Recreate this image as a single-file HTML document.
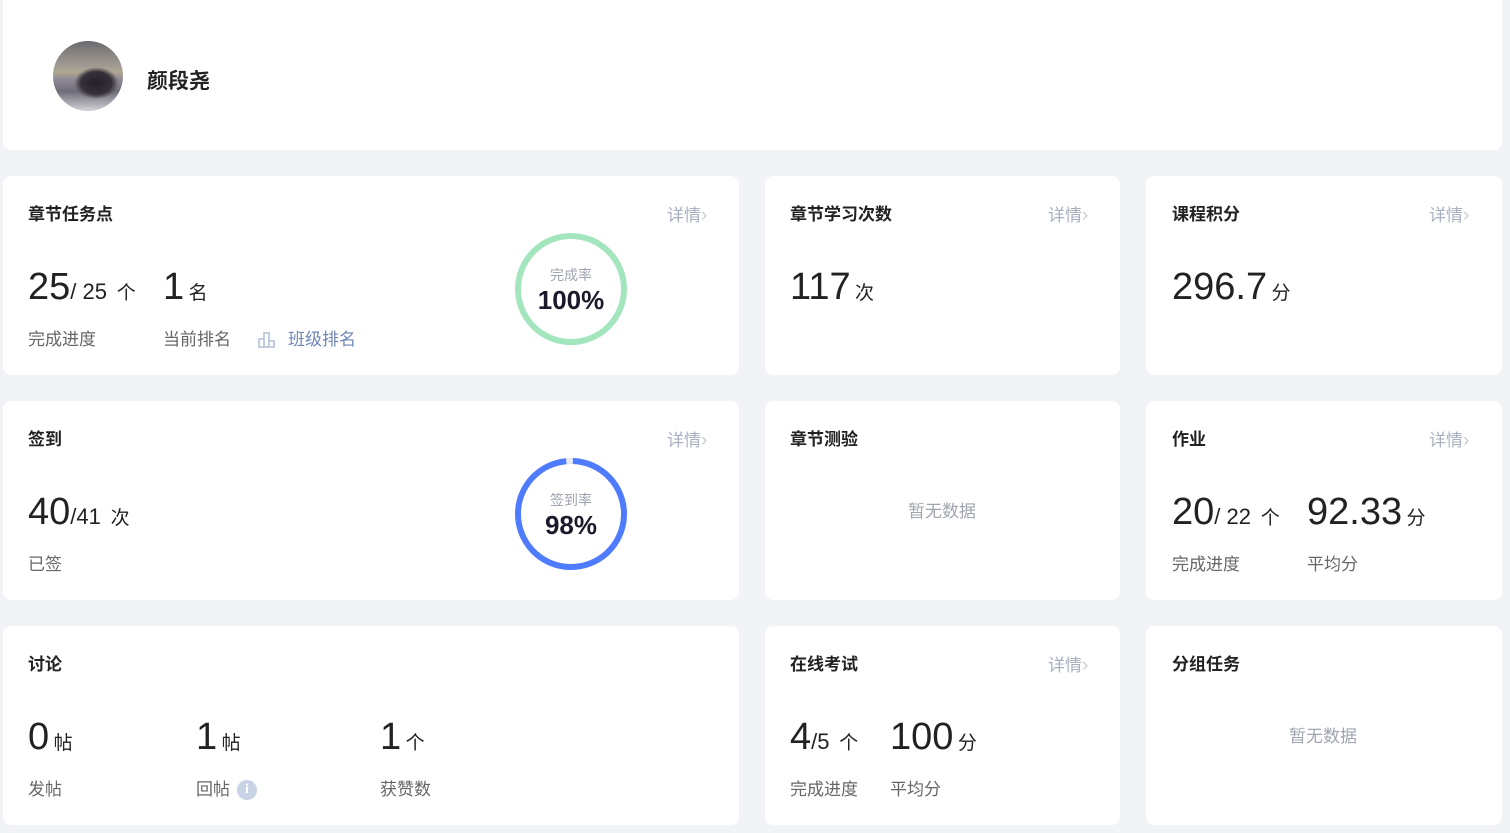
<!DOCTYPE html><html><head><meta charset="utf-8"><style>
*{margin:0;padding:0;box-sizing:border-box}
body{width:1510px;height:833px;background:#f2f3f7;position:relative;overflow:hidden;font-family:"Liberation Sans","Noto Sans CJK SC",sans-serif;color:#333}
.c{position:absolute;background:#fff;border-radius:8px}
.a{position:absolute;white-space:nowrap}
.t{font-size:17px;font-weight:bold;color:#222}
.d{font-size:17px;color:#a8b0c0}
.d b{font-weight:normal;color:#c8cdd8;font-size:19px}
.n{font-size:38px;color:#222;line-height:1}
.u{font-size:19px;color:#222}
.s{font-size:22px;color:#222}
.l{font-size:17px;color:#666}
.e{font-size:17px;color:#a0a5b0}
</style></head><body>
<div class="c" style="left:3px;top:0;width:1499px;height:150px;border-radius:0 0 8px 8px"></div>
<div class="a" style="left:53px;top:41px;width:70px;height:70px;border-radius:50%;background:radial-gradient(ellipse 22px 16px at 62% 60%,#25202a 0,#35303a 70%,transparent 100%),linear-gradient(#6c6a70 0,#a59f95 38%,#b0a890 44%,#8e8a95 55%,#6e6c78 72%,#d5d2d8 100%)"></div>
<div class="a" style="left:147px;top:65px;font-size:21px;font-weight:bold;color:#222">颜段尧</div>

<div class="c" style="left:3px;top:176px;width:736px;height:199px"></div>
<div class="c" style="left:765px;top:176px;width:355px;height:199px"></div>
<div class="c" style="left:1146px;top:176px;width:356px;height:199px"></div>
<div class="c" style="left:3px;top:401px;width:736px;height:199px"></div>
<div class="c" style="left:765px;top:401px;width:355px;height:199px"></div>
<div class="c" style="left:1146px;top:401px;width:356px;height:199px"></div>
<div class="c" style="left:3px;top:626px;width:736px;height:199px"></div>
<div class="c" style="left:765px;top:626px;width:355px;height:199px"></div>
<div class="c" style="left:1146px;top:626px;width:356px;height:199px"></div>

<!-- row1 -->
<div class="a t" style="left:28px;top:200px">章节任务点</div>
<div class="a d" style="left:667px;top:201px">详情<b>›</b></div>
<div class="a" style="left:28px;top:268px"><span class="n">25</span><span class="s">/ 25</span> <span class="u">&nbsp;个</span></div>
<div class="a" style="left:163px;top:268px"><span class="n">1</span> <span class="u">名</span></div>
<div class="a l" style="left:28px;top:325px">完成进度</div>
<div class="a l" style="left:163px;top:325px">当前排名</div>
<svg class="a" style="left:258px;top:331px" width="18" height="17"><g fill="none" stroke="#c3cde0" stroke-width="2"><rect x="1" y="8" width="5" height="8"/><rect x="6" y="2" width="5" height="14"/><rect x="11" y="10" width="5" height="6"/></g></svg>
<div class="a l" style="left:288px;top:325px;color:#6f86b5">班级排名</div>
<svg class="a" style="left:514px;top:232px" width="116" height="116"><circle cx="57" cy="57" r="53" fill="none" stroke="#a3e6be" stroke-width="6"/></svg>
<div class="a" style="left:514px;top:265px;width:114px;text-align:center;font-size:14px;color:#a0a5b0">完成率</div>
<div class="a" style="left:514px;top:285px;width:114px;text-align:center;font-size:26px;font-weight:bold;color:#1a1a2a">100%</div>

<div class="a t" style="left:790px;top:200px">章节学习次数</div>
<div class="a d" style="left:1048px;top:201px">详情<b>›</b></div>
<div class="a" style="left:790px;top:268px"><span class="n">117</span> <span class="u">次</span></div>

<div class="a t" style="left:1172px;top:200px">课程积分</div>
<div class="a d" style="left:1429px;top:201px">详情<b>›</b></div>
<div class="a" style="left:1172px;top:268px"><span class="n">296.7</span> <span class="u">分</span></div>

<!-- row2 -->
<div class="a t" style="left:28px;top:425px">签到</div>
<div class="a d" style="left:667px;top:426px">详情<b>›</b></div>
<div class="a" style="left:28px;top:493px"><span class="n">40</span><span class="s">/41</span> <span class="u">&nbsp;次</span></div>
<div class="a l" style="left:28px;top:550px">已签</div>
<svg class="a" style="left:514px;top:457px" width="116" height="116"><circle cx="57" cy="57" r="53" fill="none" stroke="#e8eaee" stroke-width="6"/><circle cx="57" cy="57" r="53" fill="none" stroke="#4f7cff" stroke-width="6" stroke-dasharray="326 333" transform="rotate(-88 57 57)"/></svg>
<div class="a" style="left:514px;top:490px;width:114px;text-align:center;font-size:14px;color:#a0a5b0">签到率</div>
<div class="a" style="left:514px;top:510px;width:114px;text-align:center;font-size:26px;font-weight:bold;color:#1a1a2a">98%</div>

<div class="a t" style="left:790px;top:425px">章节测验</div>
<div class="a e" style="left:908px;top:497px">暂无数据</div>

<div class="a t" style="left:1172px;top:425px">作业</div>
<div class="a d" style="left:1429px;top:426px">详情<b>›</b></div>
<div class="a" style="left:1172px;top:493px"><span class="n">20</span><span class="s">/ 22</span> <span class="u">&nbsp;个</span></div>
<div class="a" style="left:1307px;top:493px"><span class="n">92.33</span> <span class="u">分</span></div>
<div class="a l" style="left:1172px;top:550px">完成进度</div>
<div class="a l" style="left:1307px;top:550px">平均分</div>

<!-- row3 -->
<div class="a t" style="left:28px;top:650px">讨论</div>
<div class="a" style="left:28px;top:718px"><span class="n">0</span> <span class="u">帖</span></div>
<div class="a" style="left:196px;top:718px"><span class="n">1</span> <span class="u">帖</span></div>
<div class="a" style="left:380px;top:718px"><span class="n">1</span> <span class="u">个</span></div>
<div class="a l" style="left:28px;top:775px">发帖</div>
<div class="a l" style="left:196px;top:775px">回帖</div>
<div class="a" style="left:237px;top:780px;width:20px;height:20px;border-radius:50%;background:#c9d3e6;color:#fff;font-size:14px;font-weight:bold;text-align:center;line-height:20px;font-family:'Liberation Serif',serif">i</div>
<div class="a l" style="left:380px;top:775px">获赞数</div>

<div class="a t" style="left:790px;top:650px">在线考试</div>
<div class="a d" style="left:1048px;top:651px">详情<b>›</b></div>
<div class="a" style="left:790px;top:718px"><span class="n">4</span><span class="s">/5</span> <span class="u">&nbsp;个</span></div>
<div class="a" style="left:890px;top:718px"><span class="n">100</span> <span class="u">分</span></div>
<div class="a l" style="left:790px;top:775px">完成进度</div>
<div class="a l" style="left:890px;top:775px">平均分</div>

<div class="a t" style="left:1172px;top:650px">分组任务</div>
<div class="a e" style="left:1289px;top:722px">暂无数据</div>
</body></html>
